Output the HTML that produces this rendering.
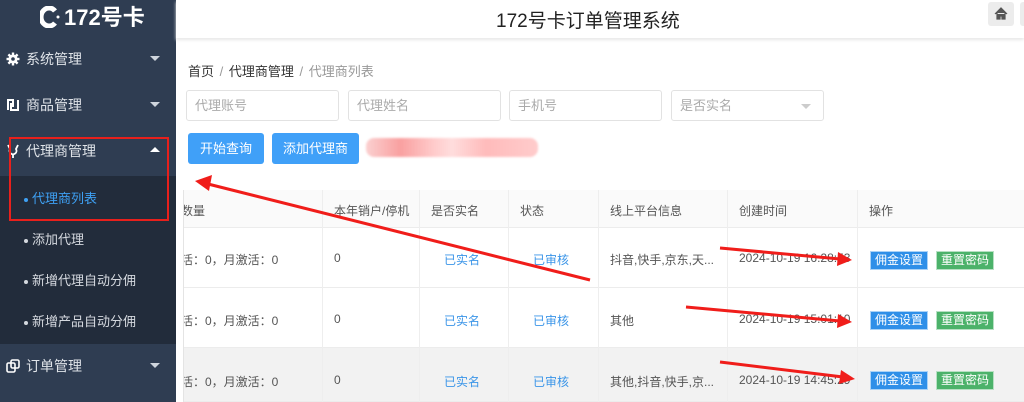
<!DOCTYPE html>
<html><head><meta charset="utf-8"><style>
*{box-sizing:border-box;margin:0;padding:0}
body{width:1024px;height:402px;overflow:hidden;background:#fff;font-family:"Liberation Sans","Noto Sans CJK SC",sans-serif;position:relative;font-size:13px;color:#333}
.side{position:absolute;left:0;top:0;width:176px;height:402px;background:#2f3d52}
.logo{position:absolute;left:40px;top:3px;color:#fff;font-size:22px;font-weight:bold;height:30px;line-height:30px}
.mi{position:absolute;left:0;width:176px;height:46px;line-height:46px;color:#dfe3e8;font-size:14px;padding-left:26px}
.mi .ic{position:absolute;left:6px;top:16px;width:14px;height:14px}
.mi .ar{position:absolute;right:16px;top:20px;width:0;height:0;border-left:5px solid transparent;border-right:5px solid transparent;border-top:5px solid #cfd5dd}
.mi .up{border-top:none;border-bottom:5px solid #fff;top:19px}
.sub{position:absolute;left:0;top:176px;width:176px;height:168px;background:#222c3b}
.si{position:absolute;left:24px;font-size:13px;color:#d5d9df}
.si:before{content:"";display:inline-block;width:4px;height:4px;border-radius:2px;background:currentColor;margin-right:4px;vertical-align:middle}
.top{position:absolute;left:176px;top:0;width:848px;height:38px;background:#fff;box-shadow:0 2px 3px #e8e8e8}
.title{position:absolute;left:496px;top:6px;font-size:19px;color:#222}
.home{position:absolute;left:988px;top:2px;width:26px;height:24px;background:#ececec;border-radius:3px}
.home2{position:absolute;left:1020px;top:2px;width:10px;height:24px;background:#ececec;border-radius:3px}
.bc{position:absolute;left:188px;top:61px;font-size:13px;color:#333;word-spacing:2px}
.bc span{color:#999}
.inp{position:absolute;top:90px;height:31px;width:153px;border:1px solid #e2e2e2;border-radius:3px;color:#aaa;padding-left:8px;line-height:29px;font-size:13px}
.btn{position:absolute;top:133px;height:31px;background:#40a0f8;color:#fff;border-radius:3px;text-align:center;line-height:31px;font-size:13px}
.tbl{position:absolute;left:183px;top:190px;width:841px;height:212px;border-left:1px solid #e4e4e4;overflow:hidden}
.row{position:absolute;left:0;width:841px;border-bottom:1px solid #ececec}
.c{position:absolute;top:0;height:100%;border-left:1px solid #eeeeee}
.t{position:absolute;font-size:12px;color:#555;white-space:nowrap}
.b{color:#3b95e8}
.tag{position:absolute;height:19px;line-height:17px;font-size:12px;color:#fff;padding:0 4px;border:1px solid rgba(255,255,255,.6)}
</style></head><body>
<div class="side">
<div class="logo"><svg width="20" height="22" style="vertical-align:-3px;margin-right:4px"><path d="M15 5 A8 9 0 1 0 15 17" fill="none" stroke="#fff" stroke-width="5"/><circle cx="18" cy="11" r="1.5" fill="#fff"/></svg>172号卡</div>
<div class="mi" style="top:36px"><svg class="ic" viewBox="0 0 14 14"><circle cx="7" cy="7" r="4.5" fill="#fff"/><circle cx="7" cy="7" r="1.8" fill="#2f3d52"/><g stroke="#fff" stroke-width="2.4"><line x1="7" y1="0.5" x2="7" y2="13.5"/><line x1="0.5" y1="7" x2="13.5" y2="7"/><line x1="2.4" y1="2.4" x2="11.6" y2="11.6"/><line x1="11.6" y1="2.4" x2="2.4" y2="11.6"/></g><circle cx="7" cy="7" r="1.8" fill="#2f3d52"/></svg>系统管理<span class="ar"></span></div>
<div class="mi" style="top:82px"><svg class="ic" viewBox="0 0 14 14"><path d="M2 12 V2 H7 V9 M5 5 V12 H12 V2" fill="none" stroke="#fff" stroke-width="2"/></svg>商品管理<span class="ar"></span></div>
<div class="mi" style="top:128px"><svg class="ic" viewBox="0 0 14 14"><path d="M2 1 L4 5 A3.5 3.5 0 1 0 10 5 L12 1" fill="none" stroke="#fff" stroke-width="1.8"/><line x1="7" y1="11" x2="7" y2="14" stroke="#fff" stroke-width="1.8"/></svg>代理商管理<span class="ar up"></span></div>
<div class="sub"></div>
<div class="si" style="top:188px;color:#3ea0f3">代理商列表</div>
<div class="si" style="top:229px">添加代理</div>
<div class="si" style="top:270px">新增代理自动分佣</div>
<div class="si" style="top:311px">新增产品自动分佣</div>
<div class="mi" style="top:343px"><svg class="ic" viewBox="0 0 14 14"><rect x="1" y="4" width="8" height="9" rx="1.5" fill="none" stroke="#fff" stroke-width="1.6"/><rect x="5" y="1" width="8" height="8" rx="1.5" fill="none" stroke="#fff" stroke-width="1.6"/></svg>订单管理<span class="ar"></span></div>
</div>
<div class="top"></div>
<div class="title">172号卡订单管理系统</div>
<div class="home"><svg width="26" height="24"><path d="M7 12 L13 6 L19 12 M9 11 V17 H12 V14 H14 V17 H17 V11" fill="#555" stroke="#555" stroke-width="1.2"/></svg></div>
<div class="home2"></div>
<div class="bc">首页 <span>/</span> 代理商管理 <span>/ 代理商列表</span></div>
<div class="inp" style="left:186px">代理账号</div>
<div class="inp" style="left:348px">代理姓名</div>
<div class="inp" style="left:509px">手机号</div>
<div class="inp" style="left:671px">是否实名<span style="position:absolute;right:12px;top:13px;border-left:5px solid transparent;border-right:5px solid transparent;border-top:5px solid #ccc"></span></div>
<div class="btn" style="left:188px;width:76px">开始查询</div>
<div class="btn" style="left:272px;width:87px">添加代理商</div>
<div style="position:absolute;left:366px;top:138px;width:172px;height:19px;background:linear-gradient(90deg,#fbd0d0,#f9a0a0 20%,#fcc 40%,#fdd 50%,#fbb 70%,#fcc);border-radius:8px;filter:blur(1px)"></div>
<div class="tbl">
<div class="row" style="top:0;height:38px;background:#fafafa"></div>
<div class="row" style="top:38px;height:60px"></div>
<div class="row" style="top:98px;height:60px"></div>
<div class="row" style="top:158px;height:54px;background:#f2f2f2"></div>
<div class="c" style="left:138px"></div><div class="c" style="left:235px"></div><div class="c" style="left:324px"></div><div class="c" style="left:414px"></div><div class="c" style="left:543px"></div><div class="c" style="left:673px"></div>
<div class="t" style="left:-3px;top:12px">数量</div><div class="t" style="left:150px;top:12px">本年销户/停机</div><div class="t" style="left:247px;top:12px">是否实名</div><div class="t" style="left:336px;top:12px">状态</div><div class="t" style="left:426px;top:12px">线上平台信息</div><div class="t" style="left:555px;top:12px">创建时间</div><div class="t" style="left:685px;top:12px">操作</div>
<div class="t" style="left:-3px;top:61px">活：0，月激活：0</div><div class="t" style="left:150px;top:61px">0</div><div class="t b" style="left:260px;top:61px">已实名</div><div class="t b" style="left:349px;top:61px">已审核</div><div class="t" style="left:426px;top:61px">抖音,快手,京东,天...</div><div class="t" style="left:555px;top:61px">2024-10-19 16:28:53</div>
<div class="t" style="left:-3px;top:122px">活：0，月激活：0</div><div class="t" style="left:150px;top:122px">0</div><div class="t b" style="left:260px;top:122px">已实名</div><div class="t b" style="left:349px;top:122px">已审核</div><div class="t" style="left:426px;top:122px">其他</div><div class="t" style="left:555px;top:122px">2024-10-19 15:01:10</div>
<div class="t" style="left:-3px;top:183px">活：0，月激活：0</div><div class="t" style="left:150px;top:183px">0</div><div class="t b" style="left:260px;top:183px">已实名</div><div class="t b" style="left:349px;top:183px">已审核</div><div class="t" style="left:426px;top:183px">其他,抖音,快手,京...</div><div class="t" style="left:555px;top:183px">2024-10-19 14:45:29</div>
<div class="tag" style="left:686px;top:61px;background:#2f8fe8">佣金设置</div><div class="tag" style="left:752px;top:61px;background:#4cb26a">重置密码</div>
<div class="tag" style="left:686px;top:121px;background:#2f8fe8">佣金设置</div><div class="tag" style="left:752px;top:121px;background:#4cb26a">重置密码</div>
<div class="tag" style="left:686px;top:181px;background:#2f8fe8">佣金设置</div><div class="tag" style="left:752px;top:181px;background:#4cb26a">重置密码</div>
</div>
<svg style="position:absolute;left:0;top:0" width="1024" height="402">
<rect x="10" y="138" width="158" height="82" fill="none" stroke="#e8201c" stroke-width="2"/>
<g stroke="#f01d1a" stroke-width="3" fill="#f01d1a">
<line x1="590" y1="280" x2="208" y2="184"/><polygon points="195,181 212,175 209,191" stroke="none"/>
<line x1="720" y1="248" x2="840" y2="259"/><polygon points="852,260 838,252 837,266" stroke="none"/>
<line x1="686" y1="307" x2="840" y2="321"/><polygon points="852,322 838,314 837,328" stroke="none"/>
<line x1="720" y1="362" x2="843" y2="377"/><polygon points="855,379 841,370 839,384" stroke="none"/>
</g></svg>
</body></html>
